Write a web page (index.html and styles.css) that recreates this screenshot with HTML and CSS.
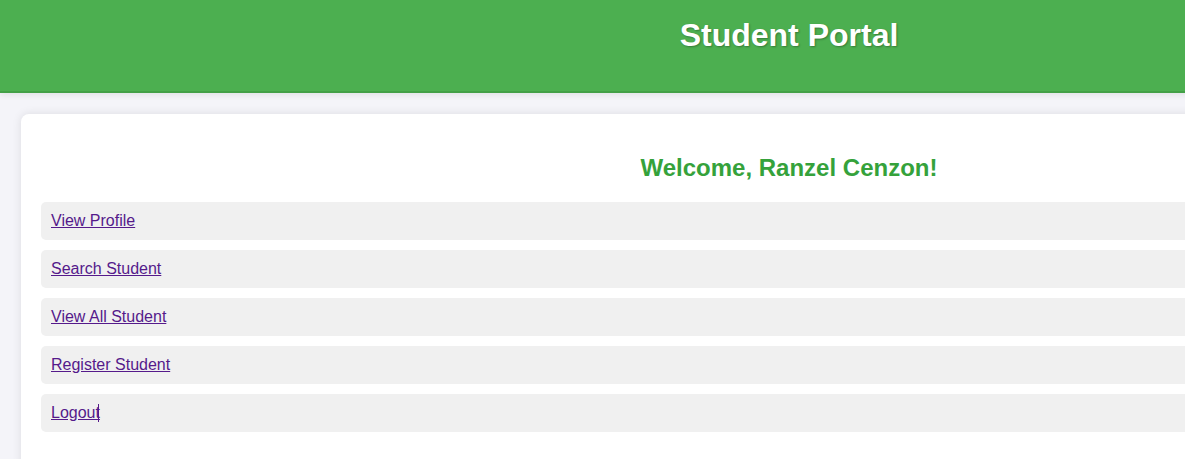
FILE: index.html
```html
<!DOCTYPE html>
<html lang="en">
<head>
<meta charset="utf-8">
<title>Student Portal</title>
<link rel="stylesheet" href="styles.css">
</head>
<body>
<div class="page">
  <header class="site-header">
    <h1 class="site-title">Student Portal</h1>
  </header>
  <main class="card">
    <h2 class="welcome">Welcome, Ranzel Cenzon!</h2>
    <ul class="menu">
      <li class="menu-item"><a href="#">View Profile</a></li>
      <li class="menu-item"><a href="#">Search Student</a></li>
      <li class="menu-item"><a href="#">View All Student</a></li>
      <li class="menu-item"><a href="#">Register Student</a></li>
      <li class="menu-item"><a href="#">Logout</a><span class="caret"></span></li>
    </ul>
  </main>
</div>
</body>
</html>
```

FILE: styles.css
```css
html, body {
  margin: 0;
  padding: 0;
  overflow: hidden;
  background: #f4f4f9;
  font-family: "Liberation Sans", Arial, sans-serif;
}

.page {
  width: 1578px;
}

.site-header {
  background: #4caf50;
  height: 91px;
  border-bottom: 2px solid #43a047;
  display: flex;
  align-items: flex-start;
  justify-content: center;
  box-shadow: 0 2px 6px rgba(0, 0, 0, 0.08);
}

.site-title {
  margin: 17px 0 0;
  font-size: 32px;
  line-height: 37px;
  font-weight: bold;
  color: #fff;
  text-shadow: 1px 1px 2px rgba(0, 0, 0, 0.3);
}

.card {
  margin: 21px 21px 0;
  background: #fff;
  border-radius: 8px;
  box-shadow: 0 0 10px rgba(0, 0, 0, 0.1);
  padding: 34px 20px 40px;
}

.welcome {
  margin: 0 0 14px;
  text-align: center;
  font-size: 24px;
  line-height: 40px;
  font-weight: bold;
  color: #35a23b;
}

.menu {
  list-style: none;
  margin: 0;
  padding: 0;
  display: flex;
  flex-direction: column;
  gap: 10px;
}

.menu-item {
  background: #f0f0f0;
  border-radius: 5px;
  height: 38px;
  padding: 0 10px;
  display: flex;
  align-items: center;
  font-size: 16px;
}

.menu-item a {
  color: #551a8b;
  text-decoration: underline;
}

.caret {
  display: inline-block;
  width: 1px;
  height: 18px;
  background: #551a8b;
  margin-left: -2px;
}
```
